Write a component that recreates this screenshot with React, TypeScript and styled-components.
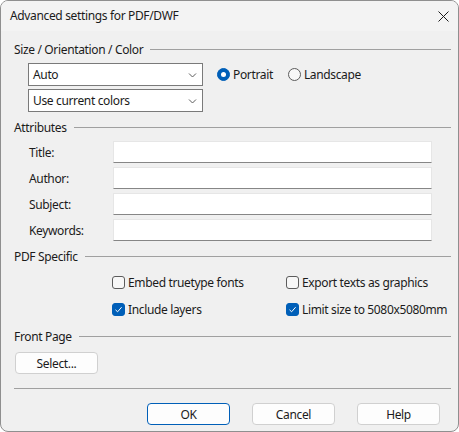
import React from "react";
import styled, { createGlobalStyle } from "styled-components";

const Global = createGlobalStyle`
  html, body { margin: 0; padding: 0; background: #ffffff; }
  * { box-sizing: border-box; }
  body { font-family: "Noto Sans", "Open Sans", sans-serif; font-size: 12px; letter-spacing: -0.35px; color: #1b1b1b; }
`;

const Window = styled.div`
  width: 459px;
  height: 432px;
  border: 1px solid #8f8f8f;
  border-radius: 8px;
  overflow: hidden;
  background: #f0f0f0;
  display: flex;
  flex-direction: column;
`;

const TitleBar = styled.div`
  height: 30px;
  background: #f3f3f3;
  display: flex;
  align-items: center;
  justify-content: space-between;
  padding: 0 9px 0 9px;
  flex-shrink: 0;
`;

const TitleText = styled.div`
  font-size: 12px;
  margin-top: -1px;
`;

const CloseBtn = styled.div`
  width: 12px;
  height: 12px;
  display: flex;
  align-items: center;
  justify-content: center;
`;

const Body = styled.div`
  flex: 1;
  display: flex;
  flex-direction: column;
  padding: 10px 7px 0 13px;
`;

const SectionHead = styled.div<{ $mt?: number }>`
  display: flex;
  align-items: center;
  gap: 7px;
  height: 16px;
  margin-top: ${(p) => p.$mt ?? 0}px;
`;

const SectionLabel = styled.span`
  white-space: nowrap;
`;

const Rule = styled.div`
  flex: 1;
  height: 1px;
  background: #a0a0a0;
`;

const OrientRow = styled.div`
  display: flex;
  margin-top: 6px;
  padding-left: 14px;
`;

const ComboCol = styled.div`
  display: flex;
  flex-direction: column;
  gap: 3px;
`;

const Combo = styled.div`
  width: 175px;
  height: 23px;
  background: #ffffff;
  border: 1px solid #7a7a7a;
  display: flex;
  align-items: center;
  justify-content: space-between;
  padding: 0 5px 0 4px;
`;

const RadioGroup = styled.div`
  display: flex;
  align-items: center;
  height: 23px;
  margin-left: 14px;
  gap: 15px;
`;

const Option = styled.label`
  display: flex;
  align-items: center;
  gap: 3px;
  white-space: nowrap;
`;

const RadioDot = styled.span<{ $on?: boolean }>`
  width: 13px;
  height: 13px;
  border-radius: 50%;
  display: inline-flex;
  align-items: center;
  justify-content: center;
  background: ${(p) => (p.$on ? "#005fb8" : "#f7f7f7")};
  border: 1px solid ${(p) => (p.$on ? "#005fb8" : "#5c5c5c")};
  &::after {
    content: "";
    display: ${(p) => (p.$on ? "block" : "none")};
    width: 5px;
    height: 5px;
    border-radius: 50%;
    background: #ffffff;
  }
`;

const FieldGrid = styled.div`
  display: grid;
  grid-template-columns: 84px 319px;
  row-gap: 4px;
  align-items: center;
  padding-left: 15px;
  margin-top: 6px;
`;

const FieldLabel = styled.span``;

const Input = styled.div`
  height: 22px;
  background: #ffffff;
  border: 1px solid #e6e6e6;
  border-bottom: 1px solid #868686;
`;

const CheckGrid = styled.div`
  display: grid;
  grid-template-columns: 174px auto;
  row-gap: 10px;
  padding-left: 98px;
  margin-top: 10px;
`;

const Box = styled.span<{ $on?: boolean }>`
  width: 13px;
  height: 13px;
  border-radius: 3px;
  display: inline-flex;
  align-items: center;
  justify-content: center;
  background: ${(p) => (p.$on ? "#005fb8" : "#f7f7f7")};
  border: 1px solid ${(p) => (p.$on ? "#005fb8" : "#5c5c5c")};
`;

const Button = styled.button<{ $default?: boolean }>`
  width: 83px;
  height: 22px;
  background: #fdfdfd;
  border: 1px solid ${(p) => (p.$default ? "#005fb8" : "#d0d0d0")};
  border-radius: 4px;
  font-family: inherit;
  font-size: 12px;
  letter-spacing: inherit;
  color: #1b1b1b;
  padding: 0;
  display: flex;
  align-items: center;
  justify-content: center;
`;

const SelectWrap = styled.div`
  margin-top: 8px;
  padding-left: 1px;
`;

const Separator = styled.div`
  height: 1px;
  background: #a0a0a0;
  margin-top: 14px;
`;

const ButtonRow = styled.div`
  display: flex;
  justify-content: flex-end;
  gap: 22px;
  margin-top: 14px;
  padding-right: 11px;
`;

const Chevron = () => (
  <svg width="9" height="6" viewBox="0 0 9 6">
    <path d="M1 1.5 L4.5 5 L8 1.5" fill="none" stroke="#5c5c5c" strokeWidth="1" />
  </svg>
);

const Tick = () => (
  <svg width="9" height="9" viewBox="0 0 9 9">
    <path d="M1.5 4.8 L3.6 6.8 L7.6 2.2" fill="none" stroke="#ffffff" strokeWidth="1" />
  </svg>
);

export default function App() {
  return (
    <>
      <Global />
      <Window>
        <TitleBar>
          <TitleText>Advanced settings for PDF/DWF</TitleText>
          <CloseBtn>
            <svg width="11" height="11" viewBox="0 0 11 11">
              <path d="M0.5 0.5 L10.5 10.5 M10.5 0.5 L0.5 10.5" stroke="#1b1b1b" strokeWidth="1" />
            </svg>
          </CloseBtn>
        </TitleBar>
        <Body>
          <SectionHead>
            <SectionLabel>Size / Orientation / Color</SectionLabel>
            <Rule />
          </SectionHead>
          <OrientRow>
            <ComboCol>
              <Combo>
                <span>Auto</span>
                <Chevron />
              </Combo>
              <Combo>
                <span>Use current colors</span>
                <Chevron />
              </Combo>
            </ComboCol>
            <RadioGroup>
              <Option>
                <RadioDot $on />
                Portrait
              </Option>
              <Option>
                <RadioDot />
                Landscape
              </Option>
            </RadioGroup>
          </OrientRow>

          <SectionHead $mt={7}>
            <SectionLabel>Attributes</SectionLabel>
            <Rule />
          </SectionHead>
          <FieldGrid>
            <FieldLabel>Title:</FieldLabel>
            <Input />
            <FieldLabel>Author:</FieldLabel>
            <Input />
            <FieldLabel>Subject:</FieldLabel>
            <Input />
            <FieldLabel>Keywords:</FieldLabel>
            <Input />
          </FieldGrid>

          <SectionHead $mt={7}>
            <SectionLabel>PDF Specific</SectionLabel>
            <Rule />
          </SectionHead>
          <CheckGrid>
            <Option>
              <Box />
              Embed truetype fonts
            </Option>
            <Option>
              <Box />
              Export texts as graphics
            </Option>
            <Option>
              <Box $on>
                <Tick />
              </Box>
              Include layers
            </Option>
            <Option>
              <Box $on>
                <Tick />
              </Box>
              Limit size to 5080x5080mm
            </Option>
          </CheckGrid>

          <SectionHead $mt={10}>
            <SectionLabel>Front Page</SectionLabel>
            <Rule />
          </SectionHead>
          <SelectWrap>
            <Button>Select...</Button>
          </SelectWrap>
          <Separator />
          <ButtonRow>
            <Button $default>OK</Button>
            <Button>Cancel</Button>
            <Button>Help</Button>
          </ButtonRow>
        </Body>
      </Window>
    </>
  );
}
